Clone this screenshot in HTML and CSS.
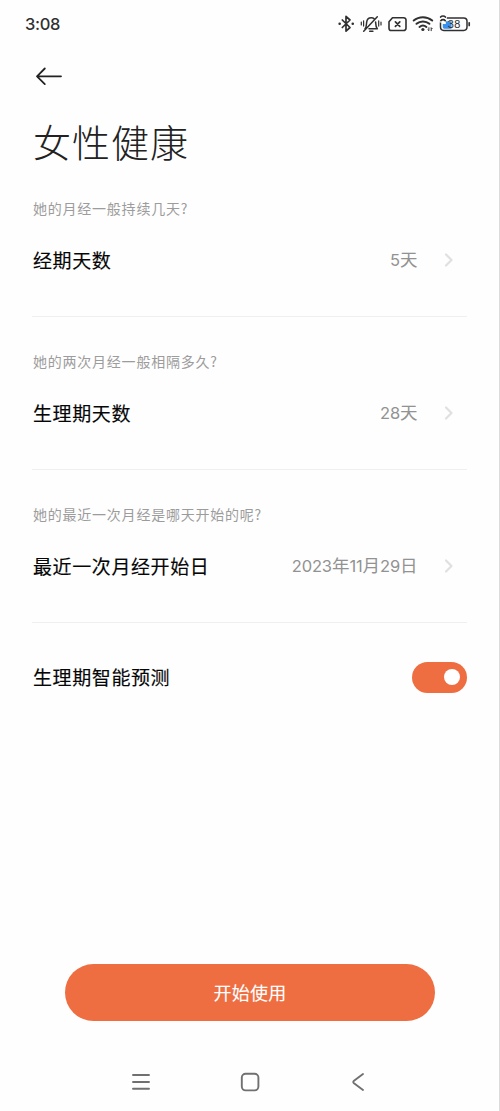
FILE: index.html
```html
<!DOCTYPE html>
<html lang="zh-CN">
<head>
<meta charset="utf-8">
<title>女性健康</title>
<link rel="stylesheet" href="styles.css">
</head>
<body>
<div class="screen">
  <header class="status">
    <span class="clock">3:08</span>
    <svg class="status-icons" width="136" height="24" viewBox="0 0 136 24" fill="none" stroke="#303030" stroke-width="1.7" stroke-linecap="round" stroke-linejoin="round">
      <path d="M6.300 8l7.700 7.500-4 3.600V4.400l4 3.600-7.700 7.500"/>
      <path d="M3.600 11.800h.1M16.700 11.800h.1" stroke-width="2.500"/>
      <path d="M29 16.800c1.600-2 1.400-4.300 1.600-6.200.3-2.900 2.200-4.800 4.700-4.800 1.200 0 2.300.4 3.100 1.200M39.600 10c.1 2.500.1 4.700 1.700 6.800H33M33.700 19.300h3.200M27.700 19.300L41.300 4.700" stroke-width="1.500"/>
      <path d="M27.600 8.800v5.300M25.300 10v3M42.700 8.800v5.300M45 10v3" stroke-width="1.200"/>
      <path d="M56.500 5.700h11.200a2.300 2.300 0 0 1 2.300 2.300v8.200a2.300 2.300 0 0 1-2.300 2.300H55.300a2.300 2.300 0 0 1-2.300-2.300V9.700z" stroke-width="1.600"/>
      <path d="M59.400 9.900l4.400 4.400M63.800 9.900l-4.400 4.400" stroke-width="1.700"/>
      <path d="M77.700 8.500c5.300-4.500 13.200-4.500 18.500 0M80.500 11.800c3.700-3.200 9.200-3.200 12.900 0M83.500 14.900c2-1.700 4.900-1.700 6.900 0" stroke-width="2"/>
      <circle cx="86.900" cy="17.500" r="1.600" fill="#303030" stroke="none"/>
      <path d="M92.900 15.700v3l-1-1M95.200 18.700v-3l1 1" stroke-width="1"/>
      <rect x="104.500" y="5.900" width="26.500" height="12.500" rx="3.300" stroke-width="1.500"/>
      <path d="M133.200 10.800v2.600" stroke-width="1.700"/>
      <path d="M103.300 2.500h7.500v8h-7.500z" fill="#fefefe" stroke="none"/>
      <path d="M106.800 12h3V9.300h5.700v7.500h-7.200c-1 0-1.500-.7-1.500-1.700z" fill="#3890ef" stroke="none"/>
      <path d="M104.600 5.100c1.200-1.500 3.600-1.500 4.800 0M104.800 8.700c1.100-1.500 3.400-1.500 4.500 0" stroke-width="1.600"/>
      <text class="battery-text" x="111.500" y="16">38</text>
    </svg>
  </header>
  <nav class="toolbar">
    <svg width="28" height="20" viewBox="0 0 28 20" fill="none" stroke="#222" stroke-width="1.800" stroke-linecap="round" stroke-linejoin="round"><path d="M26 10.300H2M9.800 2.500L2 10.300l7.800 7.800"/></svg>
  </nav>
  <h1 class="title">女性健康</h1>
  <main class="settings">
    <section class="item">
      <p class="question">她的月经一般持续几天?</p>
      <div class="row">
        <span class="label">经期天数</span>
        <span class="value"><span class="num">5</span>天</span>
        <svg class="chevron" width="10" height="16" viewBox="0 0 10 16"><path d="M2 2.500L7.500 8 2 13.500"/></svg>
      </div>
    </section>
    <section class="item">
      <p class="question">她的两次月经一般相隔多久?</p>
      <div class="row">
        <span class="label">生理期天数</span>
        <span class="value"><span class="num">28</span>天</span>
        <svg class="chevron" width="10" height="16" viewBox="0 0 10 16"><path d="M2 2.500L7.500 8 2 13.500"/></svg>
      </div>
    </section>
    <section class="item">
      <p class="question">她的最近一次月经是哪天开始的呢?</p>
      <div class="row">
        <span class="label">最近一次月经开始日</span>
        <span class="value"><span class="num">2023</span>年<span class="num">11</span>月<span class="num">29</span>日</span>
        <svg class="chevron" width="10" height="16" viewBox="0 0 10 16"><path d="M2 2.500L7.500 8 2 13.500"/></svg>
      </div>
    </section>
    <div class="predict">
      <span class="label">生理期智能预测</span>
      <span class="switch"><span class="knob"></span></span>
    </div>
  </main>
  <button class="start">开始使用</button>
  <footer class="navbar">
    <svg width="20" height="20" viewBox="0 0 20 20"><path d="M2 3h16M2 10h16M2 16.800h16"/></svg>
    <svg width="20" height="20" viewBox="0 0 20 20"><rect x="1.800" y="1.800" width="16.600" height="16.600" rx="3.800"/></svg>
    <svg width="20" height="20" viewBox="0 0 20 20"><path d="M15 2L6 8.800q-1.500 1.200 0 2.400l9 6.800"/></svg>
  </footer>
</div>
</body>
</html>
```
FILE: styles.css
```css
* { box-sizing: border-box; }
body {
  margin: 0;
  background: #fefefe;
  font-family: "Noto Sans CJK SC", sans-serif;
}
.screen {
  height: 1111px;
  display: flex;
  flex-direction: column;
  border-right: 1px solid #dcdcdc;
}
.status {
  height: 48px;
  padding: 0 27.500px 0 25px;
  display: flex;
  align-items: center;
  justify-content: space-between;
}
.clock {
  font: 450 16.500px/24px Inter, sans-serif;
  letter-spacing: -.3px;
  color: #303030;
}
.battery-text {
  font: 400 10.500px Inter, sans-serif;
  fill: #303030;
  stroke: none;
}
.toolbar {
  height: 56px;
  padding: 0 35px;
  display: flex;
  align-items: center;
}
.title {
  margin: 0;
  padding-left: 33px;
  height: 60px;
  line-height: 73px;
  font-size: 38px;
  font-weight: 300;
  letter-spacing: 1px;
  color: #222;
}
.settings { padding: 0 32px; }
.item {
  height: 153px;
  padding-top: 33px;
  border-bottom: 1px solid #efefef;
}
.question {
  margin: 0;
  padding-left: 1px;
  font-size: 14px;
  line-height: 22px;
  letter-spacing: .77px;
  color: #9c9c9c;
}
.row {
  margin-top: 23px;
  height: 36px;
  padding: 0 13px 0 1px;
  display: flex;
  align-items: center;
}
.label {
  font-size: 19px;
  line-height: 28px;
  letter-spacing: .6px;
  -webkit-text-stroke: .15px #060606;
  color: #060606;
}
.value {
  margin-left: auto;
  padding-bottom: 1px;
  font-size: 17.500px;
  line-height: 28px;
  color: #929292;
}
.num {
  font-family: Inter, sans-serif;
  font-size: 16.500px;
  letter-spacing: -.15px;
}
.chevron {
  margin-left: 26.500px;
  fill: none;
  stroke: #e0e0e0;
  stroke-width: 2.200;
  stroke-linecap: round;
  stroke-linejoin: round;
}
.predict {
  height: 108px;
  padding-left: 1px;
  display: flex;
  align-items: center;
  justify-content: space-between;
}
.switch {
  width: 55px;
  height: 31px;
  padding: 0 7px;
  border-radius: 16px;
  background: #ee6e41;
  display: flex;
  align-items: center;
  justify-content: flex-end;
}
.knob {
  width: 16px;
  height: 16px;
  border-radius: 50%;
  background: #fff;
}
.start {
  margin: auto 64px 0 65px;
  height: 57px;
  padding: 0 0 2px;
  border: 0;
  border-radius: 29px;
  background: #ee6e41;
  color: #fff;
  font: 400 18px/28px "Noto Sans CJK SC", sans-serif;
  -webkit-text-stroke: .1px #fff;
  letter-spacing: .3px;
}
.navbar {
  height: 90px;
  padding: 51px 131px 0;
  display: flex;
  justify-content: space-between;
  align-items: flex-start;
}
.navbar svg {
  fill: none;
  stroke: #707070;
  stroke-width: 1.900;
  stroke-linecap: round;
  stroke-linejoin: round;
}
```
